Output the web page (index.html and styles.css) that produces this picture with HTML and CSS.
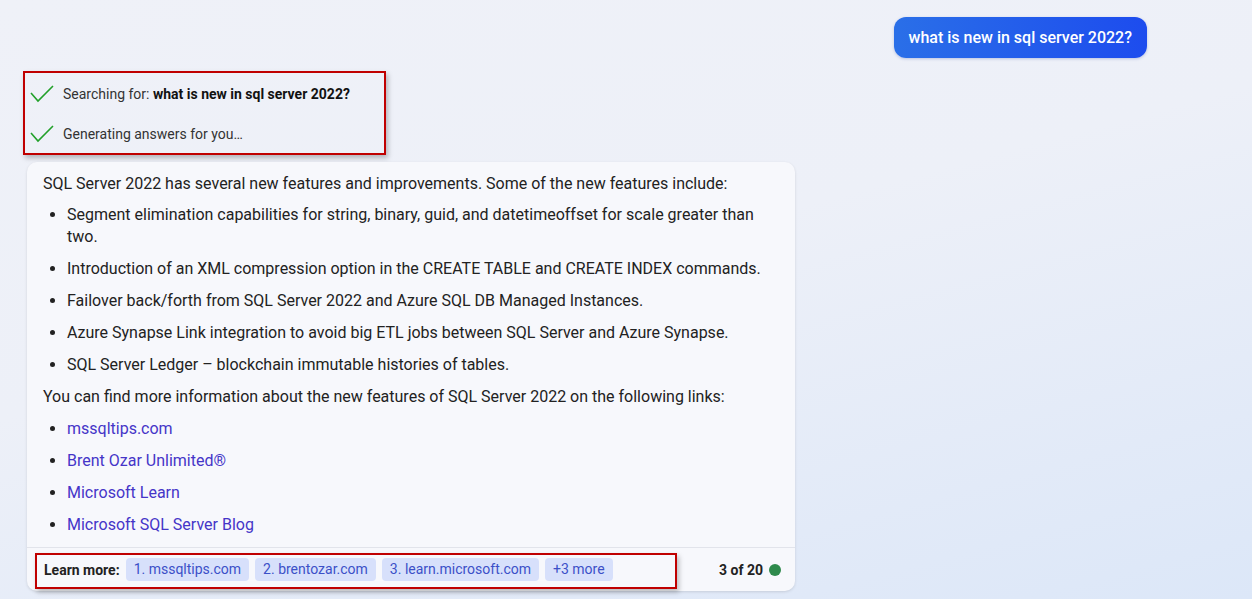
FILE: index.html
```html
<!DOCTYPE html>
<html>
  <head>
    <link rel="stylesheet" href="styles.css">
  </head>
  <body>
    <div class="chat">
      <div class="user-row">
        <div class="user-bubble">what is new in sql server 2022?</div>
      </div>

      <div class="status">
        <div class="status-line">
          <svg class="check" width="24" height="18" viewBox="0 0 24 18"><polyline points="1,8 8,16 23,1" fill="none" stroke="#22a02a" stroke-width="1.6"/></svg>
          <span>Searching for: <b>what is new in sql server 2022?</b></span>
        </div>
        <div class="status-line">
          <svg class="check" width="24" height="18" viewBox="0 0 24 18"><polyline points="1,8 8,16 23,1" fill="none" stroke="#22a02a" stroke-width="1.6"/></svg>
          <span>Generating answers for you…</span>
        </div>
      </div>

      <div class="answer">
        <div class="answer-body">
          <p>SQL Server 2022 has several new features and improvements. Some of the new features include:</p>
          <ul>
            <li>Segment elimination capabilities for string, binary, guid, and datetimeoffset for scale greater than two.</li>
            <li>Introduction of an XML compression option in the CREATE TABLE and CREATE INDEX commands.</li>
            <li>Failover back/forth from SQL Server 2022 and Azure SQL DB Managed Instances.</li>
            <li>Azure Synapse Link integration to avoid big ETL jobs between SQL Server and Azure Synapse.</li>
            <li>SQL Server Ledger – blockchain immutable histories of tables.</li>
          </ul>
          <p>You can find more information about the new features of SQL Server 2022 on the following links:</p>
          <ul class="links">
            <li><a href="#">mssqltips.com</a></li>
            <li><a href="#">Brent Ozar Unlimited®</a></li>
            <li><a href="#">Microsoft Learn</a></li>
            <li><a href="#">Microsoft SQL Server Blog</a></li>
          </ul>
        </div>
        <div class="answer-footer">
          <div class="learn-more">
            <span class="learn-label">Learn more:</span>
            <a class="chip" href="#">1. mssqltips.com</a>
            <a class="chip" href="#">2. brentozar.com</a>
            <a class="chip" href="#">3. learn.microsoft.com</a>
            <a class="chip" href="#">+3 more</a>
          </div>
          <div class="turns">3 of 20 <span class="dot"></span></div>
        </div>
      </div>
    </div>
  </body>
</html>
```

FILE: styles.css
```css
body {
  margin: 0;
  height: 599px;
  overflow: hidden;
  font-family: Roboto, "Liberation Sans", sans-serif;
  color: #222;
  background: linear-gradient(165deg, #eff1f8 0%, #edf0f8 45%, #e2eaf8 80%, #dce7f8 100%);
}
.chat {
  padding: 17px 105px 0 0;
}
.user-row {
  display: flex;
  justify-content: flex-end;
}
.user-bubble {
  height: 41px;
  line-height: 41px;
  padding: 0 15px;
  border-radius: 12px;
  color: #fff;
  font-size: 16px;
  font-weight: 500;
  background: linear-gradient(90deg, #2a6fe8, #1d4cee);
  box-shadow: 0 1px 3px rgba(30, 60, 160, 0.25);
}
.status {
  margin: 13px 0 0 23px;
  width: 354px;
  height: 78px;
  border: 2px solid #c00000;
  box-shadow: 2px 3px 5px rgba(0, 0, 0, 0.25);
  padding: 2px 0 0 5px;
  box-sizing: content-box;
  display: flex;
  flex-direction: column;
  justify-content: center;
  gap: 22px;
  font-size: 14px;
  color: #333;
}
.status-line {
  display: flex;
  align-items: center;
  gap: 9px;
}
.status-line b {
  color: #111;
}
.check {
  display: block;
}
.answer {
  margin: 7px 0 0 27px;
  width: 768px;
  background: #f7f8fc;
  border-radius: 10px;
  box-shadow: 0 1px 3px rgba(0, 0, 0, 0.12);
}
.answer-body {
  padding: 11px 16px 11px 16px;
  font-size: 16px;
  line-height: 22px;
}
.answer-body p {
  margin: 0;
}
.answer-body ul {
  margin: 9px 0 10px 0;
  padding-left: 24px;
}
.answer-body li {
  margin-top: 10px;
}
.answer-body li:first-child {
  margin-top: 0;
}
.answer-body ul.links {
  margin: 10px 0 0 0;
}
.links a {
  color: #4535c8;
  text-decoration: none;
}
.answer-footer {
  border-top: 1px solid #e2e4eb;
  height: 43px;
  display: flex;
  align-items: center;
  justify-content: space-between;
  padding: 0 14px 0 8px;
}
.learn-more {
  display: flex;
  align-items: center;
  gap: 6px;
  width: 631px;
  height: 29px;
  margin-top: 3px;
  padding: 0 0 3px 7px;
  border: 2px solid #c00000;
  box-shadow: 2px 3px 5px rgba(0, 0, 0, 0.25);
  font-size: 14px;
}
.learn-label {
  font-weight: 700;
  color: #222;
}
.chip {
  background: #d7e0fb;
  color: #3c50c8;
  text-decoration: none;
  padding: 0 8px;
  height: 23px;
  line-height: 23px;
  border-radius: 4px;
}
.turns {
  display: flex;
  align-items: center;
  gap: 6px;
  font-size: 14px;
  font-weight: 700;
  color: #222;
}
.dot {
  width: 12px;
  height: 12px;
  border-radius: 50%;
  background: #2e8a4c;
}
```
